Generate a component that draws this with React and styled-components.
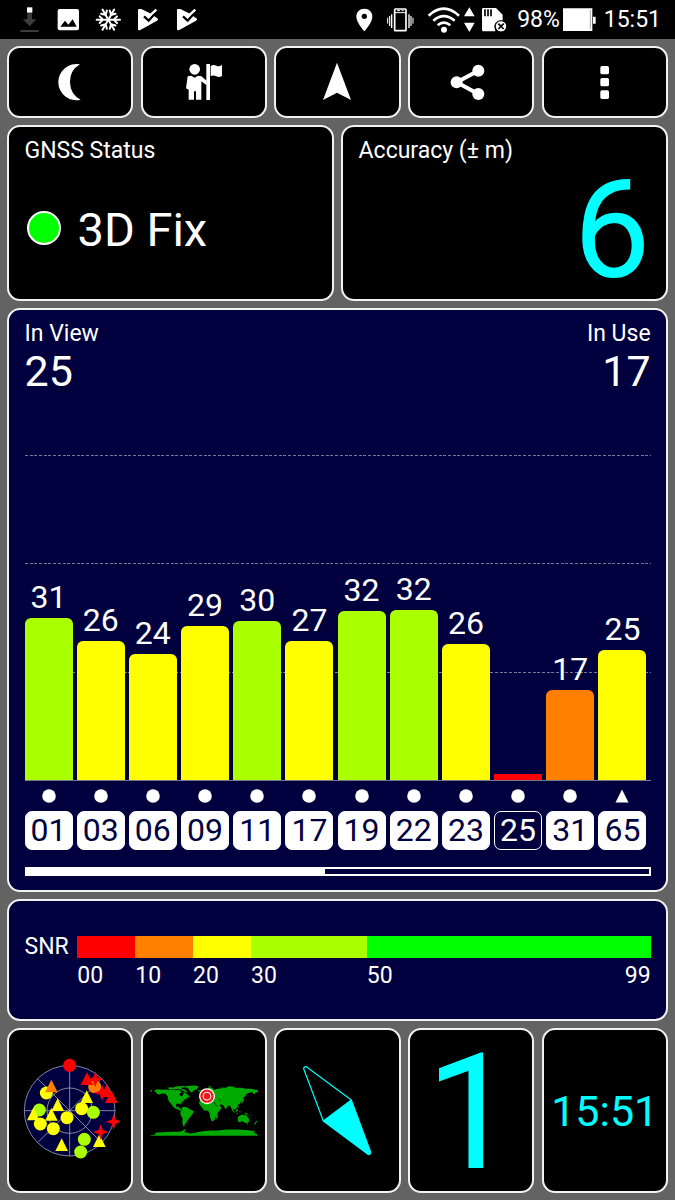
import React from 'react';
import styled, { createGlobalStyle } from 'styled-components';

const GlobalStyle = createGlobalStyle`
  * {
    box-sizing: border-box;
  }
  body {
    margin: 0;
    background: #636363;
    color: #fff;
    font-family: Roboto, sans-serif;
  }
  svg {
    display: block;
    flex: none;
  }
`;

const Screen = styled.div`
  width: 675px;
  height: 1200px;
  overflow: hidden;
`;

const StatusBar = styled.header`
  height: 39px;
  padding: 0 14px 0 10px;
  background: #000;
  display: flex;
  justify-content: space-between;
`;

const StatusGroup = styled.div`
  display: flex;
  align-items: center;
  height: 39px;
`;

const StatusText = styled.span`
  width: ${props => props.width}px;
  font-size: 23px;
  line-height: 41px;
  text-align: ${props => props.align || 'left'};
  white-space: nowrap;
`;

const Content = styled.main`
  padding: 7px 7.1px 0 7px;
  display: grid;
  grid-template-rows: 72px 176px 584px 122px 165px;
  row-gap: 7px;
`;

const Row = styled.div`
  display: grid;
  grid-template-columns: repeat(${props => props.columns}, 1fr);
  column-gap: 7.3px;
`;

const Card = styled.section`
  border: 2px solid #f2f2f2;
  border-radius: 13px;
  background: ${props => (props.$navy ? '#00003f' : '#000')};
  padding: ${props => props.$padding || '10px 15.3px 0 15.5px'};
`;

const Tile = styled(Card)`
  padding: 0;
  display: flex;
  align-items: center;
  justify-content: center;
`;

const ToolButton = styled(Tile).attrs({ as: 'button' })`
  cursor: pointer;
`;

const Label = styled.div`
  font-size: 23px;
  line-height: 27px;
`;

const StatusValue = styled.div`
  height: 130px;
  display: flex;
  align-items: center;
  gap: 17px;
  padding-left: 2px;
  font-size: 47px;
`;

const FixLight = styled.span`
  width: 34px;
  height: 34px;
  border: 2px solid #fff;
  border-radius: 50%;
  background: #00ff00;
  margin-top: -2px;
`;

const AccuracyValue = styled.div`
  color: #00ffff;
  font-size: 137px;
  line-height: 133px;
  text-align: right;
`;

const ChartHeader = styled.div`
  display: flex;
  justify-content: space-between;
`;

const Count = styled.div`
  text-align: ${props => props.align};
`;

const CountValue = styled.div`
  font-size: 43px;
  line-height: 49px;
`;

const Plot = styled.div`
  display: grid;
  height: 385px;
  border-bottom: 1px solid #77778c;
`;

const GridLines = styled.div`
  grid-area: 1 / 1;
  align-self: end;
`;

const GridLine = styled.div`
  height: 108.4px;
  background: repeating-linear-gradient(90deg, #77779a 0 3px, transparent 3px 4.7px) top / 100% 1px no-repeat;
`;

const Columns = styled.div`
  grid-area: 1 / 1;
  display: grid;
  grid-template-columns: repeat(12, 1fr);
  align-items: end;
`;

const Column = styled.div`
  width: 48px;
  text-align: center;
  font-size: 32px;
`;

const Snr = styled.div`
  line-height: 40px;
  margin-bottom: 1px;
`;

const Bar = styled.div`
  background: ${props => props.color};
  border-radius: ${props => (props.$flat ? '0' : '6px 6px 0 0')};
`;

const Satellites = styled.div`
  display: grid;
  grid-template-columns: repeat(12, 1fr);
  padding-top: 8px;
`;

const Satellite = styled.div`
  width: 48px;
  display: flex;
  flex-direction: column;
  align-items: center;
  gap: 8px;
`;

const Badge = styled.div`
  width: 48px;
  height: 39px;
  border: 1px solid #fff;
  border-radius: 7px;
  background: ${props => (props.$used ? '#fff' : 'transparent')};
  color: ${props => (props.$used ? '#00003f' : '#fff')};
  font-size: 32px;
  line-height: 37px;
  text-align: center;
`;

const ScrollTrack = styled.div`
  width: 100%;
  height: 9px;
  margin-top: 17px;
  border: 2px solid #fff;
`;

const ScrollThumb = styled.div`
  width: 48%;
  height: 100%;
  background: #fff;
`;

const Legend = styled.div`
  display: grid;
  grid-template-columns: 52.8px 1fr;
  align-items: center;
`;

const LegendTitle = styled.div`
  font-size: 23px;
  line-height: 22px;
`;

const Scale = styled.div`
  display: grid;
  grid-template-columns: 10fr 10fr 10fr 20fr 49fr;
  height: ${props => props.height}px;
`;

const ScaleBand = styled.div`
  background: ${props => props.color};
`;

const ScaleLabel = styled.div`
  display: flex;
  justify-content: space-between;
  font-size: 23px;
  line-height: 36px;
`;

const TrackCount = styled.div`
  color: #00ffff;
  font-size: 162px;
  line-height: 156px;
  padding-top: 4px;
`;

const Clock = styled.div`
  color: #00ffff;
  font-size: 43px;
`;

const colors = {
  red: '#ff0000',
  orange: '#ff8000',
  yellow: '#ffff00',
  lime: '#aaff00',
  green: '#00ff00',
};

const satellites = [
  { id: '01', snr: 31, height: 162, color: colors.lime },
  { id: '03', snr: 26, height: 139, color: colors.yellow },
  { id: '06', snr: 24, height: 126.5, color: colors.yellow },
  { id: '09', snr: 29, height: 154.5, color: colors.yellow },
  { id: '11', snr: 30, height: 159.5, color: colors.lime },
  { id: '17', snr: 27, height: 139.5, color: colors.yellow },
  { id: '19', snr: 32, height: 169, color: colors.lime },
  { id: '22', snr: 32, height: 170, color: colors.lime },
  { id: '23', snr: 26, height: 136, color: colors.yellow },
  { id: '25', snr: null, height: 6.5, color: colors.red },
  { id: '31', snr: 17, height: 90.5, color: colors.orange },
  { id: '65', snr: 25, height: 130, color: colors.yellow, glonass: true },
];

const skyMarks = [
  ['circle', 140, 204, 'yellow'],
  ['triangle', 155, 184, 'orange'],
  ['circle', 119, 255, 'lime'],
  ['triangle', 101, 268, 'yellow'],
  ['circle', 122, 297, 'yellow'],
  ['triangle', 174, 240, 'yellow'],
  ['triangle', 155, 269, 'yellow'],
  ['circle', 161, 311, 'yellow'],
  ['circle', 202, 278, 'yellow'],
  ['triangle', 261, 216, 'yellow'],
  ['circle', 246, 251, 'yellow'],
  ['circle', 281, 262, 'lime'],
  ['circle', 254, 343, 'lime'],
  ['circle', 243, 381, 'lime'],
  ['triangle', 186, 360, 'yellow'],
  ['triangle', 299, 348, 'yellow'],
  ['star', 303, 321, 'red'],
  ['star', 342, 290, 'red'],
  ['circle', 285, 185, 'orange'],
  ['triangle', 262, 162, 'red'],
  ['star', 287, 163, 'red'],
  ['star', 307, 203, 'red'],
  ['triangle', 321, 198, 'red'],
  ['triangle', 335, 216, 'red'],
  ['circle', 210, 121, 'red'],
];

const SkyMark = ({ type, x, y, color }) => {
  if (type === 'circle') return <circle cx={x} cy={y} r="19.5" fill={color} />;
  if (type === 'triangle') return <path d={`M${x} ${y - 20}l19 38h-38z`} fill={color} />;
  return <path d={`M${x} ${y - 24}l6 18 18 6 -18 6 -6 18 -6 -18 -18 -6 18 -6z`} fill={color} />;
};

const SkyPlot = () => (
  <svg width="100" height="104.7" viewBox="61 99 300 314">
    <circle cx="210" cy="257" r="136" fill="#00003f" />
    <g fill="none" stroke="#9c9cb4" strokeWidth="2.5">
      <circle cx="210" cy="257" r="136" />
      <circle cx="210" cy="257" r="68" />
      <path d="M210 121v272M74 257h272M114 161l192 192M306 161L114 353" />
    </g>
    {skyMarks.map(([type, x, y, color], i) => (
      <SkyMark key={i} type={type} x={x} y={y} color={colors[color]} />
    ))}
  </svg>
);

const WorldMap = () => (
  <svg width="108" height="53" viewBox="45 73 324 158">
    <g fill="#00aa00">
      <path d="M57 93l10-5 14 2 12-1 11 2 8-1 10 1 8-1 6 3 4 6-7 3 2 5 6 2 4-6 1-7 7 4 7 6 5 5-7 2-3 4-7 2-4 6-5 3-2 6-4-3-8 1-3 6 4 4 5-3 0 5 5 1 2 6 5 1-5 2-9-5-9-4-7-6-5-8-6-5-3-9-1-8-7-7-10-1-9 3-4-1z" />
      <path d="M97 84l10-2 8 2 4-3 11-2 14-1 9 2-7 3-8 1 5 4-6 2-8-3-10 2-8-1-6 2zM138 87l8 1 9 5 1 5-8-3-7-3z" />
      <path d="M147 81l14-3 18-1 11 2-2 6-4 4-8 3-5 6-5-2-4-6-3-5z" />
      <path d="M188 92l8-1 2 3-6 2z" />
      <path d="M140 143l8-2 9 2 7 5 11 5-1 7-4 6-5 6-6 8-4 5-2 6-4 1 0 8-4-1-3-10 1-13-6-10-1-9 4-6z" />
      <path d="M192 131l2-8 5-6-1-6 4-8 8-4 4-10 8-6 8 1 7 6 10-3 11 0 4-4 11 1 8-5 11 1 9 4 17 0 15 3 15 0 25 5 0 5-10 0-5 6-4-1-1-5-10 2-8 3-5 8-4 2-2 10-6 4-5 7-6 2-1 9-7 6-5-5 1 9-4-3-4-11-5-3-6 4-3 8-4-5-4-8-7-3-5 5 6 3-1 6-6 7-4 6-1 7-5 4-3 8-5 5-5-1-4-12-1-10-5-8-11-1-5-6z" />
      <path d="M244 169l4-5 1 5-3 8-3-1zM308 172l7-5 7-3 5 1 1 3 4-5 5 8 5 6 0 8-6 6-7-3-7-4-9 3-4-2zM336 192l4 0-2 4z" />
      <path d="M290 147l8 8 2 4-6-4zM302 151l7-5-1 8-5 2zM313 153l4 1-2 5zM326 157l9 3 8 5-9-1zM301 160l10 1-3 2zM318 128l5-3 1-8 3 1-2 9-6 4zM305 133l5 4 1 7-4-3zM356 194l4-5 4-6 3 1-5 7-4 4zM124 129l10 2 5 2-8-1zM345 163l7 4-3 0zM47 90l4 1-1 4-5 0z" />
      <path d="M218 81l7-2 6 2-7 3zM253 85l8-4-5 5zM283 81l8 1-3 3zM314 86l6 0-1 2z" />
      <path d="M45 227l16-3 0-5 20-2 30-1 18 0 11-2 9-6 4 1-5 6 3 3 18 3 17-4 17-3 26-2 20 0 18-2 19-1 24 0 33 2 17 3-3 5 11 5v4H45z" />
    </g>
    <g stroke="#000" strokeWidth="2" fill="none">
      <path d="M237 127l9 13M253 117l2 8" />
    </g>
    <circle cx="216" cy="109" r="24" fill="#fff" />
    <circle cx="216" cy="109" r="20" fill="#f01818" />
    <circle cx="216" cy="109" r="12" fill="none" stroke="#fff" strokeWidth="3" />
  </svg>
);

const Compass = () => (
  <svg width="75.3" height="98" viewBox="91 111 226 294">
    <g stroke="#00ffff" strokeWidth="3.5" strokeLinejoin="round">
      <path d="M161 288L102 131q1-7 8-6l135 100" fill="none" />
      <path d="M245 225l58 156q0 8-7 8L161 288z" fill="#00ffff" />
    </g>
  </svg>
);

const ToolIcon = ({ children }) => (
  <svg width="44" height="44" viewBox="-66 -66 132 132" fill="#fff">
    {children}
  </svg>
);

const PlayCheck = () => (
  <svg width="39.33" height="39" viewBox="385 0 118 117">
    <path d="M418 27l7 0 26 13 22 15q5 4-1 7L422 90q-7 3-7-3V30q0-3 3-3z" fill="#fff" />
    <path d="M433 49l14 13 25-28" fill="none" stroke="#000" strokeWidth="7" />
    <path d="M436 40l11 10 23-21" fill="none" stroke="#fff" strokeWidth="7" />
  </svg>
);

const Notifications = () => (
  <StatusGroup>
    <svg width="39.33" height="39" viewBox="31 0 118 117">
      <path d="M83 40h14v18h13L90 79 69 58h14zM62 90h55v6H62z" fill="#3c3c3c" />
      <path d="M82 22h16v16H82z" fill="#fff" />
    </svg>
    <svg width="39.33" height="39" viewBox="149 0 118 117">
      <rect x="175" y="27" width="64" height="64" rx="6" fill="#fff" />
      <path d="M183 80l14-18 10 12 13-16 12 22z" fill="#000" />
    </svg>
    <svg width="39.33" height="39" viewBox="267 0 118 117">
      {[30, 90, 150, 210, 270, 330].map(angle => (
        <path
          key={angle}
          d="M325 59V24M325 43l-10-10M325 43l10-10"
          transform={`rotate(${angle} 325 59)`}
          fill="none"
          stroke="#fff"
          strokeWidth="6"
          strokeLinecap="round"
        />
      ))}
    </svg>
    <PlayCheck />
    <PlayCheck />
  </StatusGroup>
);

const SystemIcons = () => (
  <StatusGroup>
    <svg width="159" height="39" viewBox="60 0 477 117">
      <path d="M88 26c-14 0-24 10-24 24 0 17 24 44 24 44s24-27 24-44c0-14-10-24-24-24z" fill="#fff" />
      <circle cx="88" cy="49" r="8" fill="#000" />
      <g fill="none" stroke="#fff">
        <rect x="179" y="27" width="34" height="65" rx="2" strokeWidth="5" />
        <path d="M180 38h32" strokeWidth="3" />
        <path d="M186 32h9M200 32h6" strokeWidth="3" />
        <path d="M170 43v41M222 43v41" strokeWidth="4" />
        <path d="M164 48v30M228 48v30" strokeWidth="3.5" />
        <path d="M158 53v18M234 53v18" strokeWidth="3" />
      </g>
      <g fill="none" stroke="#fff" strokeWidth="8">
        <path d="M281 47q45-42 91 0" />
        <path d="M295 62q31-27 64 0" />
        <path d="M308 76q18-16 38 0" />
      </g>
      <circle cx="327" cy="89" r="9" fill="#fff" />
      <path d="M403 22l16 27h-32zM403 96l16-28h-32z" fill="#fff" />
      <path d="M445 24h38l20 20v18h-10q-16 3-15 20l3 12h-36q-4 0-4-4V28q0-4 4-4z" fill="#fff" />
      <path d="M450 28v21M459 28v21M468 28v21" stroke="#000" strokeWidth="5" />
      <circle cx="498" cy="79" r="17" fill="#fff" stroke="#000" strokeWidth="3" />
      <path d="M490 71l16 16M506 71l-16 16" stroke="#000" strokeWidth="5" />
    </svg>
    <StatusText width={49} align="center">98%</StatusText>
    <svg width="33" height="39" viewBox="687 0 99 117">
      <path d="M687 25h88v68h-88zM777 50h8v21h-8z" fill="#fff" />
      <path d="M769 30v58" stroke="#999" strokeWidth="2.5" />
    </svg>
    <StatusText width={65} align="right">15:51</StatusText>
  </StatusGroup>
);

const App = () => (
  <Screen>
    <GlobalStyle />
    <StatusBar>
      <Notifications />
      <SystemIcons />
    </StatusBar>

    <Content>
      <Row columns={5}>
        <ToolButton>
          <ToolIcon>
            <path d="M30 -53A54.3 54.3 0 1 0 32 53A60.8 60.8 0 0 1 30 -53z" />
          </ToolIcon>
        </ToolButton>
        <ToolButton>
          <ToolIcon>
            <circle cx="-28" cy="-38" r="16" />
            <path d="M-49 -17L-38 -19 -28 -13 -18 -19 -8 -17 8 -4V10L-8 -2V53H-24V28H-30V53H-46V23L-54 19z" />
            <path d="M7 -54H18V54H7zM20 -48Q29 -54 37 -49T54 -52V-18Q45 -12 37 -17T20 -18z" />
          </ToolIcon>
        </ToolButton>
        <ToolButton>
          <ToolIcon>
            <path d="M0 -58L42 54 0 32 -42 54z" />
          </ToolIcon>
        </ToolButton>
        <ToolButton>
          <ToolIcon>
            <path d="M22 -34L-43 1 22 36" fill="none" stroke="#fff" strokeWidth="12" />
            <circle cx="22" cy="-34" r="18" />
            <circle cx="-43" cy="1" r="18" />
            <circle cx="22" cy="36" r="18" />
          </ToolIcon>
        </ToolButton>
        <ToolButton>
          <ToolIcon>
            <rect x="-14" y="-48" width="26" height="25" rx="5" />
            <rect x="-14" y="-12" width="26" height="25" rx="5" />
            <rect x="-14" y="25" width="26" height="26" rx="5" />
          </ToolIcon>
        </ToolButton>
      </Row>

      <Row columns={2}>
        <Card>
          <Label>GNSS Status</Label>
          <StatusValue>
            <FixLight />
            3D Fix
          </StatusValue>
        </Card>
        <Card>
          <Label>Accuracy (± m)</Label>
          <AccuracyValue>6</AccuracyValue>
        </Card>
      </Row>

      <Card $navy>
        <ChartHeader>
          <Count align="left">
            <Label>In View</Label>
            <CountValue>25</CountValue>
          </Count>
          <Count align="right">
            <Label>In Use</Label>
            <CountValue>17</CountValue>
          </Count>
        </ChartHeader>
        <Plot>
          <GridLines>
            <GridLine />
            <GridLine />
            <GridLine />
          </GridLines>
          <Columns>
            {satellites.map(sat => (
              <Column key={sat.id}>
                {sat.snr && <Snr>{sat.snr}</Snr>}
                <Bar color={sat.color} $flat={!sat.snr} style={{ height: sat.height }} />
              </Column>
            ))}
          </Columns>
        </Plot>
        <Satellites>
          {satellites.map(sat => (
            <Satellite key={sat.id}>
              <svg width="14" height="14" viewBox="0 0 14 14" fill="#fff">
                {sat.glonass ? <path d="M7 .5L13.5 13.5H.5z" /> : <circle cx="7" cy="7" r="6.8" />}
              </svg>
              <Badge $used={Boolean(sat.snr)}>{sat.id}</Badge>
            </Satellite>
          ))}
        </Satellites>
        <ScrollTrack>
          <ScrollThumb />
        </ScrollTrack>
      </Card>

      <Card $navy $padding="35px 15.3px 0 15.5px">
        <Legend>
          <LegendTitle>SNR</LegendTitle>
          <Scale height={22}>
            <ScaleBand color={colors.red} />
            <ScaleBand color={colors.orange} />
            <ScaleBand color={colors.yellow} />
            <ScaleBand color={colors.lime} />
            <ScaleBand color={colors.green} />
          </Scale>
          <span />
          <Scale height={36}>
            <ScaleLabel>00</ScaleLabel>
            <ScaleLabel>10</ScaleLabel>
            <ScaleLabel>20</ScaleLabel>
            <ScaleLabel>30</ScaleLabel>
            <ScaleLabel>
              <span>50</span>
              <span>99</span>
            </ScaleLabel>
          </Scale>
        </Legend>
      </Card>

      <Row columns={5}>
        <Tile>
          <SkyPlot />
        </Tile>
        <Tile>
          <WorldMap />
        </Tile>
        <Tile>
          <Compass />
        </Tile>
        <Tile>
          <TrackCount>1</TrackCount>
        </Tile>
        <Tile>
          <Clock>15:51</Clock>
        </Tile>
      </Row>
    </Content>
  </Screen>
);

export default App;
